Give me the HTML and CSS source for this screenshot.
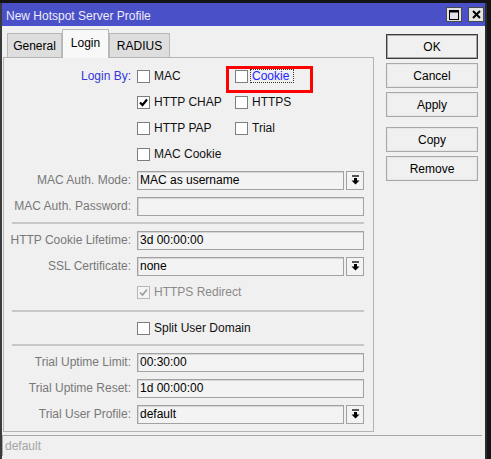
FILE: index.html
```html
<!DOCTYPE html>
<html>
<head>
<meta charset="utf-8">
<title>New Hotspot Server Profile</title>
<link rel="stylesheet" href="styles.css">
</head>
<body>
<div class="window">
  <div class="titlebar">
    <span class="title">New Hotspot Server Profile</span>
    <div class="tb-btns">
      <span class="tb-btn"><svg width="10" height="10" viewBox="0 0 10 10"><rect x="0.5" y="0.5" width="9" height="9" fill="none" stroke="#000"/><rect x="0" y="0" width="10" height="2.5" fill="#000"/></svg></span>
      <span class="tb-btn"><svg width="9" height="9" viewBox="0 0 9 9"><path d="M1 1L8 8M8 1L1 8" stroke="#000" stroke-width="2"/></svg></span>
    </div>
  </div>
  <div class="main">
    <div class="left">
      <div class="tabs">
        <div class="tab tab-general">General</div>
        <div class="tab tab-login active">Login</div>
        <div class="tab tab-radius">RADIUS</div>
      </div>
      <div class="panel">
        <div class="row">
          <span class="label label-blue">Login By:</span>
          <div class="checks">
            <span class="cb"><span class="box"></span>MAC</span>
            <span class="cb"><span class="box"></span><span class="focus">Cookie</span></span>
          </div>
        </div>
        <div class="row">
          <span class="label"></span>
          <div class="checks">
            <span class="cb"><span class="box"><svg width="11" height="11" viewBox="0 0 11 11"><path d="M2 5.5L4.5 8L9 2.5" fill="none" stroke="#000" stroke-width="2.2"/></svg></span>HTTP CHAP</span>
            <span class="cb"><span class="box"></span>HTTPS</span>
          </div>
        </div>
        <div class="row">
          <span class="label"></span>
          <div class="checks">
            <span class="cb"><span class="box"></span>HTTP PAP</span>
            <span class="cb"><span class="box"></span>Trial</span>
          </div>
        </div>
        <div class="row">
          <span class="label"></span>
          <div class="checks">
            <span class="cb"><span class="box"></span>MAC Cookie</span>
          </div>
        </div>
        <div class="row">
          <span class="label">MAC Auth. Mode:</span>
          <div class="select">
            <span class="field">MAC as username</span>
            <span class="dd"><svg width="9" height="10" viewBox="0 0 9 10"><rect x="1" y="0" width="7" height="2" fill="#555"/><rect x="3" y="3" width="3" height="3" fill="#000"/><path d="M0.5 5.5H8.5L4.5 9.5Z" fill="#000"/></svg></span>
          </div>
        </div>
        <div class="row">
          <span class="label">MAC Auth. Password:</span>
          <span class="field"></span>
        </div>
        <div class="sep"></div>
        <div class="row">
          <span class="label">HTTP Cookie Lifetime:</span>
          <span class="field">3d 00:00:00</span>
        </div>
        <div class="row">
          <span class="label">SSL Certificate:</span>
          <div class="select">
            <span class="field">none</span>
            <span class="dd"><svg width="9" height="10" viewBox="0 0 9 10"><rect x="1" y="0" width="7" height="2" fill="#555"/><rect x="3" y="3" width="3" height="3" fill="#000"/><path d="M0.5 5.5H8.5L4.5 9.5Z" fill="#000"/></svg></span>
          </div>
        </div>
        <div class="row">
          <span class="label"></span>
          <div class="checks">
            <span class="cb cb-disabled"><span class="box"><svg width="11" height="11" viewBox="0 0 11 11"><path d="M2 5.5L4.5 8L9 2.5" fill="none" stroke="#9a9a9a" stroke-width="1.6"/></svg></span>HTTPS Redirect</span>
          </div>
        </div>
        <div class="sep sep-wide"></div>
        <div class="row">
          <span class="label"></span>
          <div class="checks">
            <span class="cb"><span class="box"></span>Split User Domain</span>
          </div>
        </div>
        <div class="sep"></div>
        <div class="row">
          <span class="label">Trial Uptime Limit:</span>
          <span class="field">00:30:00</span>
        </div>
        <div class="row">
          <span class="label">Trial Uptime Reset:</span>
          <span class="field">1d 00:00:00</span>
        </div>
        <div class="row">
          <span class="label">Trial User Profile:</span>
          <div class="select">
            <span class="field">default</span>
            <span class="dd"><svg width="9" height="10" viewBox="0 0 9 10"><rect x="1" y="0" width="7" height="2" fill="#555"/><rect x="3" y="3" width="3" height="3" fill="#000"/><path d="M0.5 5.5H8.5L4.5 9.5Z" fill="#000"/></svg></span>
          </div>
        </div>
      </div>
    </div>
    <div class="buttons">
      <div class="btn btn-default">OK</div>
      <div class="btn">Cancel</div>
      <div class="btn">Apply</div>
      <div class="btn btn-gap">Copy</div>
      <div class="btn">Remove</div>
    </div>
  </div>
  <div class="statusbar">default</div>
  <div class="highlight"></div>
</div>
</body>
</html>
```
FILE: styles.css
```css
html, body {
  margin: 0;
  padding: 0;
}
body {
  background: #141414;
  font-family: "Liberation Sans", Arial, sans-serif;
  font-size: 12px;
  color: #000;
  width: 491px;
  height: 459px;
  overflow: hidden;
}
.window {
  position: relative;
  margin-top: 3px;
  width: 487px;
  height: 456px;
  box-sizing: border-box;
  border-left: 2px solid #3b3b3b;
  border-right: 2px solid #2b2b2b;
  background: #f0f0f0;
  overflow: hidden;
}
.titlebar {
  height: 23px;
  background: #4a50c8;
  display: flex;
  align-items: center;
  padding-left: 4px;
  color: #eeeef8;
}
.title {
  flex: 1;
  padding-top: 2px;
}
.tb-btns {
  display: flex;
  gap: 6px;
  margin-right: 1px;
}
.tb-btn {
  width: 16px;
  height: 15px;
  box-sizing: border-box;
  border: 1px solid #4a4a4a;
  background: #e4e4e4;
  display: flex;
  align-items: center;
  justify-content: center;
}
.main {
  display: flex;
  padding: 3px 0 0 1px;
}
.left {
  width: 371px;
}
.tabs {
  display: flex;
  align-items: flex-end;
  height: 28px;
  padding-left: 4px;
}
.tab {
  height: 24px;
  box-sizing: border-box;
  border: 1px solid #b8b8b8;
  border-bottom: none;
  background: #dedede;
  display: flex;
  align-items: center;
  justify-content: center;
}
.tab-general { width: 55px; }
.tab-login { width: 47px; }
.tab-radius { width: 61px; }
.tab.active {
  height: 29px;
  background: #f8f8f8;
  margin-bottom: -1px;
  position: relative;
  z-index: 1;
  padding-bottom: 2px;
}
.panel {
  width: 371px;
  box-sizing: border-box;
  border: 1px solid #b4b4b4;
  padding: 5px 0 4px;
  background: #f0f0f0;
}
.row {
  display: grid;
  grid-template-columns: 127px 227px;
  column-gap: 6px;
  height: 26px;
  align-items: center;
}
.label {
  text-align: right;
  color: #787878;
  white-space: nowrap;
}
.label-blue {
  color: #3535d8;
}
.checks {
  display: grid;
  grid-template-columns: 98px auto;
  align-items: center;
}
.cb {
  display: flex;
  align-items: center;
  white-space: nowrap;
  color: #111;
}
.box {
  width: 13px;
  height: 13px;
  box-sizing: border-box;
  border: 1px solid #7e7e7e;
  background: #fff;
  margin-right: 4px;
  display: inline-flex;
  align-items: center;
  justify-content: center;
  flex: none;
}
.cb-disabled {
  color: #8a8a8a;
}
.cb-disabled .box {
  border-color: #b8b8b8;
  background: #f4f4f4;
}
.focus {
  color: #2424ff;
  border: 1px dotted #3a3a20;
  padding: 0 4px 0 1px;
  margin-left: -2px;
  line-height: 12px;
}
.field {
  display: block;
  height: 19px;
  box-sizing: border-box;
  border: 1px solid #a2a2a2;
  box-shadow: inset 1px 1px 0 #d6d6d6;
  background: #f3f3f3;
  padding-left: 2px;
  line-height: 17px;
  white-space: nowrap;
  overflow: hidden;
}
.select {
  display: flex;
  gap: 2px;
}
.select .field {
  flex: 1;
}
.dd {
  width: 18px;
  height: 19px;
  box-sizing: border-box;
  border: 1px solid #a2a2a2;
  background: #f3f3f3;
  display: flex;
  align-items: center;
  justify-content: center;
  flex: none;
}
.sep {
  height: 2px;
  width: 352px;
  margin: 3px 0 3px 8px;
  background: #c8c8c8;
}
.sep-wide {
  margin-top: 5px;
}
.buttons {
  margin-left: 12px;
  padding-top: 5px;
  display: flex;
  flex-direction: column;
  gap: 4px;
}
.btn {
  width: 92px;
  height: 25px;
  box-sizing: border-box;
  border: 1px solid #a8a8a8;
  box-shadow: inset 0 0 0 1px #e6e6e6;
  background: #f0f0f0;
  display: flex;
  align-items: center;
  justify-content: center;
}
.btn-default {
  border-color: #3c3c3c;
  box-shadow: inset 0 0 0 1px #a8a8a8;
}
.btn-gap {
  margin-top: 6px;
}
.statusbar {
  margin-top: 3px;
  width: 480px;
  height: 21px;
  box-sizing: border-box;
  border-top: 1px solid #a8a8a8;
  border-left: 1px solid #a8a8a8;
  padding-left: 2px;
  color: #a4a4a4;
  display: flex;
  align-items: center;
}
.highlight {
  position: absolute;
  left: 224px;
  top: 63px;
  width: 87px;
  height: 27px;
  box-sizing: border-box;
  border: 3px solid #ff0000;
}
```
